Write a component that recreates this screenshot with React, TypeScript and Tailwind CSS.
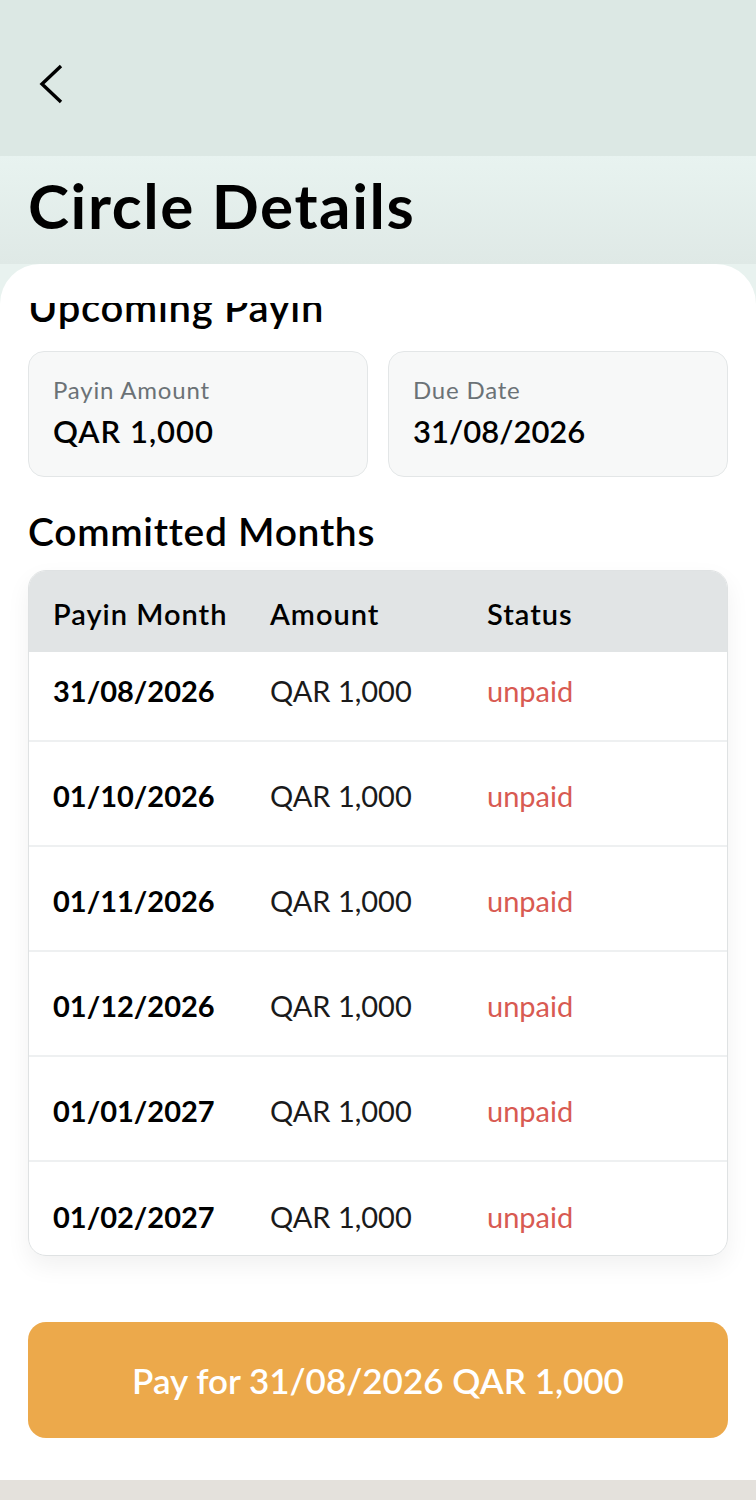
const rows = [
  "31/08/2026",
  "01/10/2026",
  "01/11/2026",
  "01/12/2026",
  "01/01/2027",
  "01/02/2027",
];

export default function App() {
  return (
    <div
      className="w-[756px] h-[1500px] overflow-hidden bg-[#e8f2ef] flex flex-col text-black"
      style={{ fontFamily: "Lato, 'Open Sans', sans-serif" }}
    >
      {/* Top bar */}
      <div className="h-[156px] shrink-0 bg-[#dce8e4] pl-[39px] pt-[64px]">
        <svg width="25" height="40" viewBox="0 0 25 40" fill="none">
          <polyline points="22,2 3,20 22,38" stroke="#000" strokeWidth="3.4" strokeLinejoin="miter" />
        </svg>
      </div>

      {/* Title */}
      <div className="h-[108px] shrink-0 bg-gradient-to-b from-[#e8f3f0] to-[#dfe9e6] px-[28px] pt-[14px]">
        <h1 className="text-[62px] font-bold leading-[70px] tracking-[1.6px]">Circle Details</h1>
      </div>

      {/* Sheet */}
      <div className="flex-1 bg-white rounded-t-[40px] overflow-hidden flex flex-col pt-[39px]">
        <div className="h-[29px] shrink-0 overflow-hidden relative">
          <h2 className="absolute left-[28px] -top-[20px] text-[40px] font-semibold leading-[48px] tracking-[0.7px] whitespace-nowrap">
            Upcoming Payin
          </h2>
        </div>

        <div className="px-[28px] grid grid-cols-2 gap-[20px] mt-[19px]">
          <div className="h-[126px] rounded-[16px] bg-[#f7f8f8] border border-[#e3e6e7] px-[24px] pt-[23px]">
            <div className="text-[24px] text-[#6b7276] leading-[30px] tracking-[0.8px]">Payin Amount</div>
            <div className="text-[31px] font-semibold leading-[40px] mt-[6px] tracking-[1px]">QAR 1,000</div>
          </div>
          <div className="h-[126px] rounded-[16px] bg-[#f7f8f8] border border-[#e3e6e7] px-[24px] pt-[23px]">
            <div className="text-[24px] text-[#6b7276] leading-[30px] tracking-[0.8px]">Due Date</div>
            <div className="text-[31px] font-semibold leading-[40px] mt-[6px]">31/08/2026</div>
          </div>
        </div>

        <h2 className="px-[28px] mt-[31px] text-[39px] font-semibold leading-[46px] tracking-[0.7px]">Committed Months</h2>

        <div className="mx-[28px] mt-[16px] h-[686px] rounded-[18px] border border-[#dfe2e3] overflow-hidden shadow-[0_10px_24px_rgba(0,0,0,0.06)] flex flex-col">
          <div className="h-[81px] shrink-0 bg-[#e1e4e5] grid grid-cols-[217px_217px_1fr] items-center px-[24px] text-[29px] font-semibold tracking-[1px] pt-[4px]">
            <div>Payin Month</div>
            <div>Amount</div>
            <div>Status</div>
          </div>
          <div className="flex-1 overflow-hidden">
            <div className="-mt-[15px]">
              {rows.map((d, i) => (
                <div
                  key={d}
                  className={
                    "h-[105px] grid grid-cols-[217px_217px_1fr] items-center px-[24px] text-[29px] pt-[4px] " +
                    (i < rows.length - 1 ? "border-b-2 border-[#eef0f1]" : "")
                  }
                >
                  <div className="font-bold">{d}</div>
                  <div className="text-[#1a1a1a]">QAR 1,000</div>
                  <div className="text-[#d85a52]">unpaid</div>
                </div>
              ))}
            </div>
          </div>
        </div>

        <div className="px-[28px] mt-[66px]">
          <button className="w-full h-[116px] rounded-[18px] bg-[#eca94b] text-white text-[35px] font-semibold">
            Pay for 31/08/2026 QAR 1,000
          </button>
        </div>

        <div className="flex-1" />
        <div className="h-[20px] shrink-0 bg-[#e4e1dc]" />
      </div>
    </div>
  );
}
